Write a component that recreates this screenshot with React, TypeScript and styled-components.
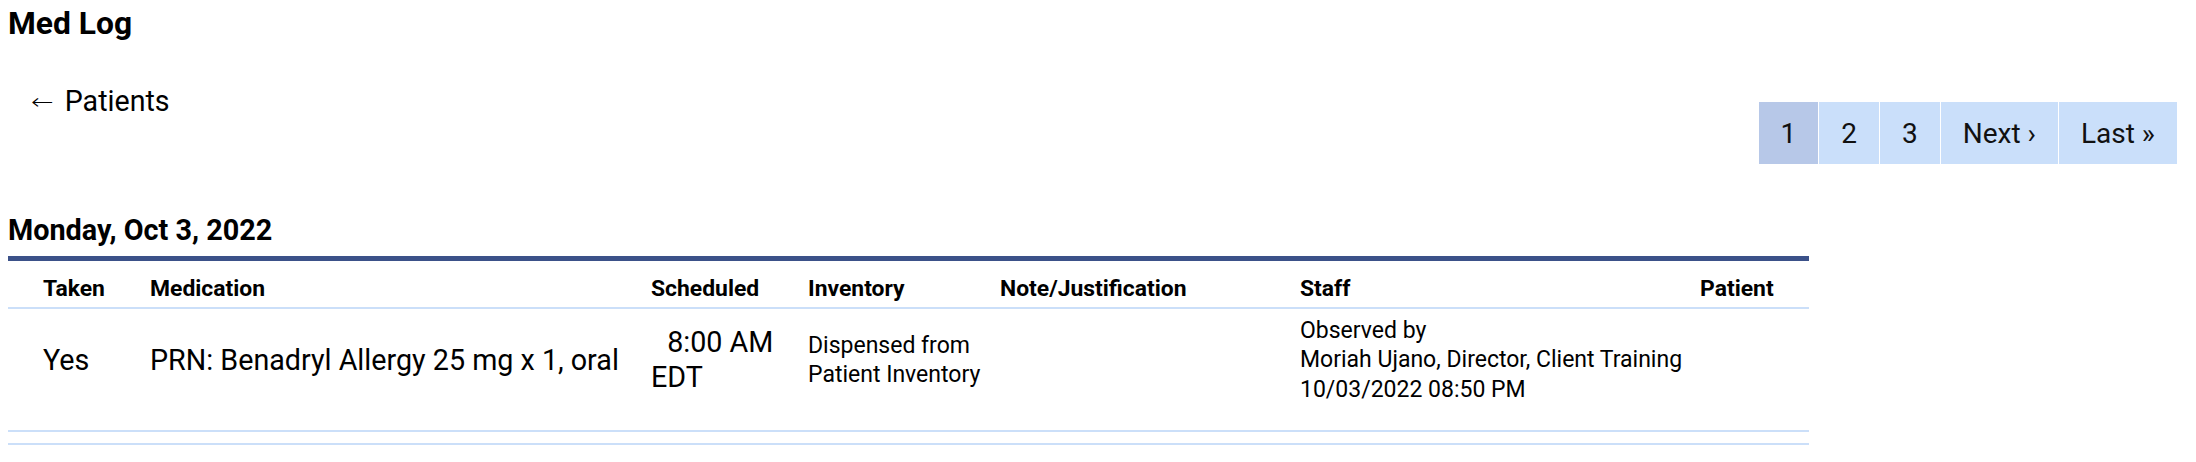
import React from "react"
import styled, { createGlobalStyle } from "styled-components"

const GlobalStyle = createGlobalStyle`
  body {
    margin: 8px;
    background: #fff;
    color: #000;
    font-family: Roboto, "Liberation Sans", Arial, sans-serif;
  }
`

const pages = ["1", "2", "3", "Next ›", "Last »"]

const columns = [
  { label: "Taken", width: 142 },
  { label: "Medication", width: 501 },
  { label: "Scheduled", width: 157 },
  { label: "Inventory", width: 192 },
  { label: "Note/Justification", width: 300 },
  { label: "Staff", width: 400 },
  { label: "Patient", width: 109 },
]

const App = () => {
  return (
    <>
      <GlobalStyle />
      <Title>Med Log</Title>
      <Toolbar>
        <BackLink href="#">
          <Arrow>←</Arrow> Patients
        </BackLink>
        <Pagination>
          {pages.map((p, i) => (
            <PageButton key={p} $active={i === 0}>
              {p}
            </PageButton>
          ))}
        </Pagination>
      </Toolbar>

      <DayHeading>Monday, Oct 3, 2022</DayHeading>
      <LogTable>
        <colgroup>
          {columns.map((c) => (
            <Col key={c.label} $w={c.width} />
          ))}
        </colgroup>
        <thead>
          <tr>
            {columns.map((c) => (
              <HeadCell key={c.label}>{c.label}</HeadCell>
            ))}
          </tr>
        </thead>
        <tbody>
          <tr>
            <Cell $big>Yes</Cell>
            <Cell $big>PRN: Benadryl Allergy 25 mg x 1, oral</Cell>
            <Cell $big>{"\u2007"}8:00 AM EDT</Cell>
            <Cell>Dispensed from Patient Inventory</Cell>
            <Cell />
            <Cell>
              Observed by
              <br />
              Moriah Ujano, Director, Client Training
              <br />
              10/03/2022 08:50 PM
            </Cell>
            <Cell />
          </tr>
        </tbody>
        <tfoot>
          <tr>
            <FootCell colSpan={7} />
          </tr>
        </tfoot>
      </LogTable>
    </>
  )
}

export default App

const Title = styled.h2`
  margin: 0;
  font-size: 31.8px;
  font-weight: 700;
  line-height: 31.4px;
`

const Toolbar = styled.div`
  display: flex;
  justify-content: space-between;
  align-items: flex-start;
  margin-top: 45.6px;
`

const BackLink = styled.a`
  display: block;
  padding-left: 23px;
  font-size: 28.6px;
  line-height: 32.8px;
  color: #000;
  text-decoration: none;
`

const Arrow = styled.span`
  display: inline-block;
  margin-right: 4px;
  font-family: "DejaVu Sans", sans-serif;
  font-size: 27px;
  font-weight: 300;
  transform: scaleY(0.8);
`

const Pagination = styled.nav`
  display: flex;
  gap: 1px;
  margin-top: 17px;
  margin-right: 11px;
`

const PageButton = styled.span<{ $active?: boolean }>`
  display: flex;
  align-items: center;
  justify-content: center;
  height: 62px;
  padding: 0 22px;
  font-size: 28px;
  color: #111;
  background: ${(p) => (p.$active ? "#b7c8e8" : "#cadffa")};
  cursor: pointer;
`

const DayHeading = styled.h3`
  margin: 50px 0 9px;
  font-size: 28.8px;
  font-weight: 700;
  line-height: 32.8px;
`

const LogTable = styled.table`
  width: 1801px;
  table-layout: fixed;
  border-collapse: collapse;
  border-top: 5px solid #3b5189;
`

const Col = styled.col<{ $w: number }>`
  width: ${(p) => p.$w}px;
`

const HeadCell = styled.th`
  padding: 12.8px 0 3.8px;
  font-size: 22.9px;
  font-weight: 700;
  line-height: 29.4px;
  text-align: left;
  border-bottom: 2px solid #cbdff9;

  &:first-child {
    padding-left: 35px;
  }
`

const Cell = styled.td<{ $big?: boolean }>`
  padding: 7.2px 0 25.6px;
  font-size: ${(p) => (p.$big ? "28.7px" : "23px")};
  line-height: ${(p) => (p.$big ? "35px" : "29.4px")};
  vertical-align: middle;
  border-bottom: 2px solid #cbdff9;

  &:first-child {
    padding-left: 35px;
  }
`

const FootCell = styled.td`
  height: 11px;
  padding: 0;
  border-bottom: 2px solid #cbdff9;
`
